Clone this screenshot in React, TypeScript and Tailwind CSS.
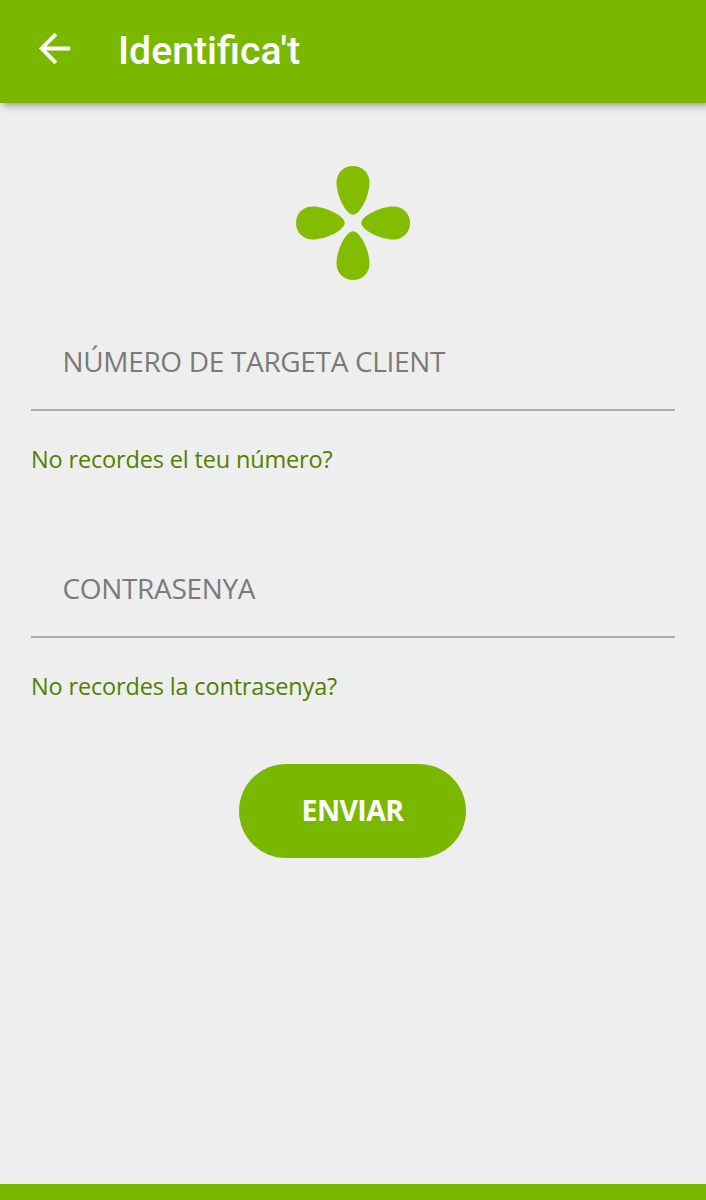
type FieldProps = {
    id: string;
    label: string;
    help: string;
};

function Logo() {
    return (
        <svg viewBox="-57 -57 114 114" className="h-[114px] w-[114px]" fill="#84bd00" aria-hidden="true">
            {[0, 90, 180, 270].map((angle) => (
                <path
                    key={angle}
                    transform={`rotate(${angle})`}
                    d="M0 -8.3C7 -8.3 16.5 -27 16.5 -40.5C16.5 -50 9.5 -57 0 -57C-9.5 -57 -16.5 -50 -16.5 -40.5C-16.5 -27 -7 -8.3 0 -8.3Z"
                />
            ))}
        </svg>
    );
}

function Field({ id, label, help }: FieldProps) {
    return (
        <div>
            <div id={id} className="flex h-[98px] items-center border-b-2 border-[#adadad] px-[31.5px] text-[28px] tracking-[-0.33px] text-[#7a7a7a]">
                {label}
            </div>
            <a href="#" className="mt-8 block text-[23.5px] leading-8 tracking-[-0.16px] text-[#528000]">
                {help}
            </a>
        </div>
    );
}

export default function App() {
    return (
        <div className="flex h-[1200px] w-full flex-col bg-[#eeeeee] font-['Open_Sans',sans-serif]">
            {/* Barra superior */}
            <header className="flex h-[103px] shrink-0 items-center bg-[#7ab800] text-white shadow-[3px_2px_8px_rgba(0,0,0,0.4)]">
                <button type="button" aria-label="Enrere" className="mb-[7px] ml-[31px]">
                    <svg viewBox="0 0 24 24" className="h-[47px] w-[47px]" fill="currentColor">
                        <path d="M20 11H7.83l5.59-5.59L12 4l-8 8 8 8 1.41-1.41L7.83 13H20v-2z" />
                    </svg>
                </button>
                <h1 className="mt-px ml-10 font-['Roboto',sans-serif] text-[39.2px] leading-none font-medium">Identifica't</h1>
            </header>

            {/* Formulari */}
            <main className="flex flex-1 flex-col px-[31px] pt-[63px]">
                <div className="flex justify-center">
                    <Logo />
                </div>
                <form className="mt-[33px] flex flex-col">
                    <Field id="targeta" label="NÚMERO DE TARGETA CLIENT" help="No recordes el teu número?" />
                    <div className="mt-[65px]">
                        <Field id="contrasenya" label="CONTRASENYA" help="No recordes la contrasenya?" />
                    </div>
                    <button
                        type="button"
                        className="mt-[62px] mr-px h-[94px] w-[227px] self-center rounded-full bg-[#7ab800] pb-0.5 text-[28.5px] font-bold tracking-[-0.6px] text-white"
                    >
                        ENVIAR
                    </button>
                </form>
            </main>

            <footer className="h-4 shrink-0 bg-[#7ab800]" />
        </div>
    );
}
